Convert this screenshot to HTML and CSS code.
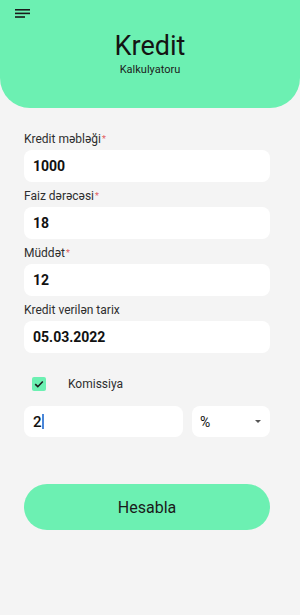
FILE: index.html
```html
<!DOCTYPE html>
<html lang="az">
<head>
<meta charset="utf-8">
<title>Kredit Kalkulyatoru</title>
<link rel="stylesheet" href="styles.css">
</head>
<body>
<div class="screen">
  <header class="header">
    <div class="topbar">
      <svg class="menu" width="16" height="10" viewBox="0 0 16 10">
        <rect x="0" y="0" width="15" height="1.6" fill="#1b1b1b"/>
        <rect x="0" y="3.6" width="15" height="1.6" fill="#1b1b1b"/>
        <rect x="0" y="7.2" width="10" height="1.6" fill="#1b1b1b"/>
      </svg>
    </div>
    <h1 class="title">Kredit</h1>
    <div class="subtitle">Kalkulyatoru</div>
  </header>

  <main class="form">
    <div class="field">
      <div class="label">Kredit məbləği<span class="req">*</span></div>
      <div class="input">1000</div>
    </div>
    <div class="field">
      <div class="label">Faiz dərəcəsi<span class="req">*</span></div>
      <div class="input">18</div>
    </div>
    <div class="field">
      <div class="label">Müddət<span class="req">*</span></div>
      <div class="input">12</div>
    </div>
    <div class="field">
      <div class="label">Kredit verilən tarix</div>
      <div class="input">05.03.2022</div>
    </div>

    <div class="check-row">
      <span class="checkbox">
        <svg width="14" height="14" viewBox="0 0 14 14">
          <path d="M3.2 7.2 L5.8 9.7 L10.8 4.5" fill="none" stroke="#1c1c1c" stroke-width="1.6"/>
        </svg>
      </span>
      <span class="check-label">Komissiya</span>
    </div>

    <div class="commission">
      <div class="input commission-input"><span class="plain">2</span><span class="cursor"></span></div>
      <div class="input select"><span class="plain">%</span><span class="arrow"></span></div>
    </div>

    <button class="button">Hesabla</button>
  </main>
</div>
</body>
</html>
```

FILE: styles.css
```css
html, body {
  margin: 0;
  padding: 0;
}
body {
  width: 300px;
  height: 615px;
  background: #f4f4f4;
  font-family: Roboto, "Liberation Sans", sans-serif;
  color: #1a1a1a;
  overflow: hidden;
}
.screen {
  display: flex;
  flex-direction: column;
}
.header {
  background: #6cf0b2;
  height: 108px;
  border-radius: 0 0 30px 30px;
  display: flex;
  flex-direction: column;
  align-items: center;
  box-sizing: border-box;
}
.topbar {
  align-self: stretch;
  height: 30px;
  padding: 9px 0 0 15px;
  box-sizing: border-box;
}
.menu {
  display: block;
}
.title {
  margin: 0;
  font-size: 27px;
  font-weight: 400;
  line-height: 32px;
  color: #141414;
}
.subtitle {
  font-size: 11px;
  line-height: 14px;
  color: #1c1c1c;
  margin-top: 1px;
}
.form {
  display: flex;
  flex-direction: column;
  padding: 23px 30px 0 24px;
}
.field {
  display: flex;
  flex-direction: column;
  gap: 3px;
  margin-bottom: 6px;
}
.label {
  font-size: 12px;
  line-height: 16px;
  color: #2e2e2e;
}
.req {
  color: #e06060;
  font-size: 9px;
  margin-left: 1px;
  vertical-align: 1px;
}
.input {
  height: 32px;
  background: #ffffff;
  border-radius: 8px;
  display: flex;
  align-items: center;
  padding-left: 9px;
  font-size: 14px;
  font-weight: 700;
  color: #111;
  box-sizing: border-box;
}
.check-row {
  display: flex;
  align-items: center;
  height: 20px;
  margin-top: 15px;
  padding-left: 8px;
}
.checkbox {
  width: 14px;
  height: 14px;
  background: #6cf0b2;
  border-radius: 2px;
  display: flex;
}
.check-label {
  margin-left: 22px;
  font-size: 12px;
  color: #2e2e2e;
}
.commission {
  display: flex;
  gap: 9px;
  margin-top: 12px;
}
.commission-input {
  width: 159px;
  height: 31px;
}
.select {
  flex: 1;
  height: 31px;
  justify-content: space-between;
  padding: 0 8px 0 8px;
}
.plain {
  font-weight: 500;
  font-size: 15px;
}
.select .plain {
  font-weight: 400;
  font-size: 14px;
}
.cursor {
  width: 1.5px;
  height: 15px;
  background: #4a86d8;
  margin-left: 0.5px;
}
.arrow {
  width: 0;
  height: 0;
  border-left: 3px solid transparent;
  border-right: 3px solid transparent;
  border-top: 3px solid #555;
  margin-right: 1px;
}
.button {
  margin-top: 47px;
  height: 46px;
  border: none;
  border-radius: 23px;
  background: #6cf0b2;
  font-family: Roboto, "Liberation Sans", sans-serif;
  font-size: 16px;
  color: #1a1a1a;
  padding: 0;
}
```
